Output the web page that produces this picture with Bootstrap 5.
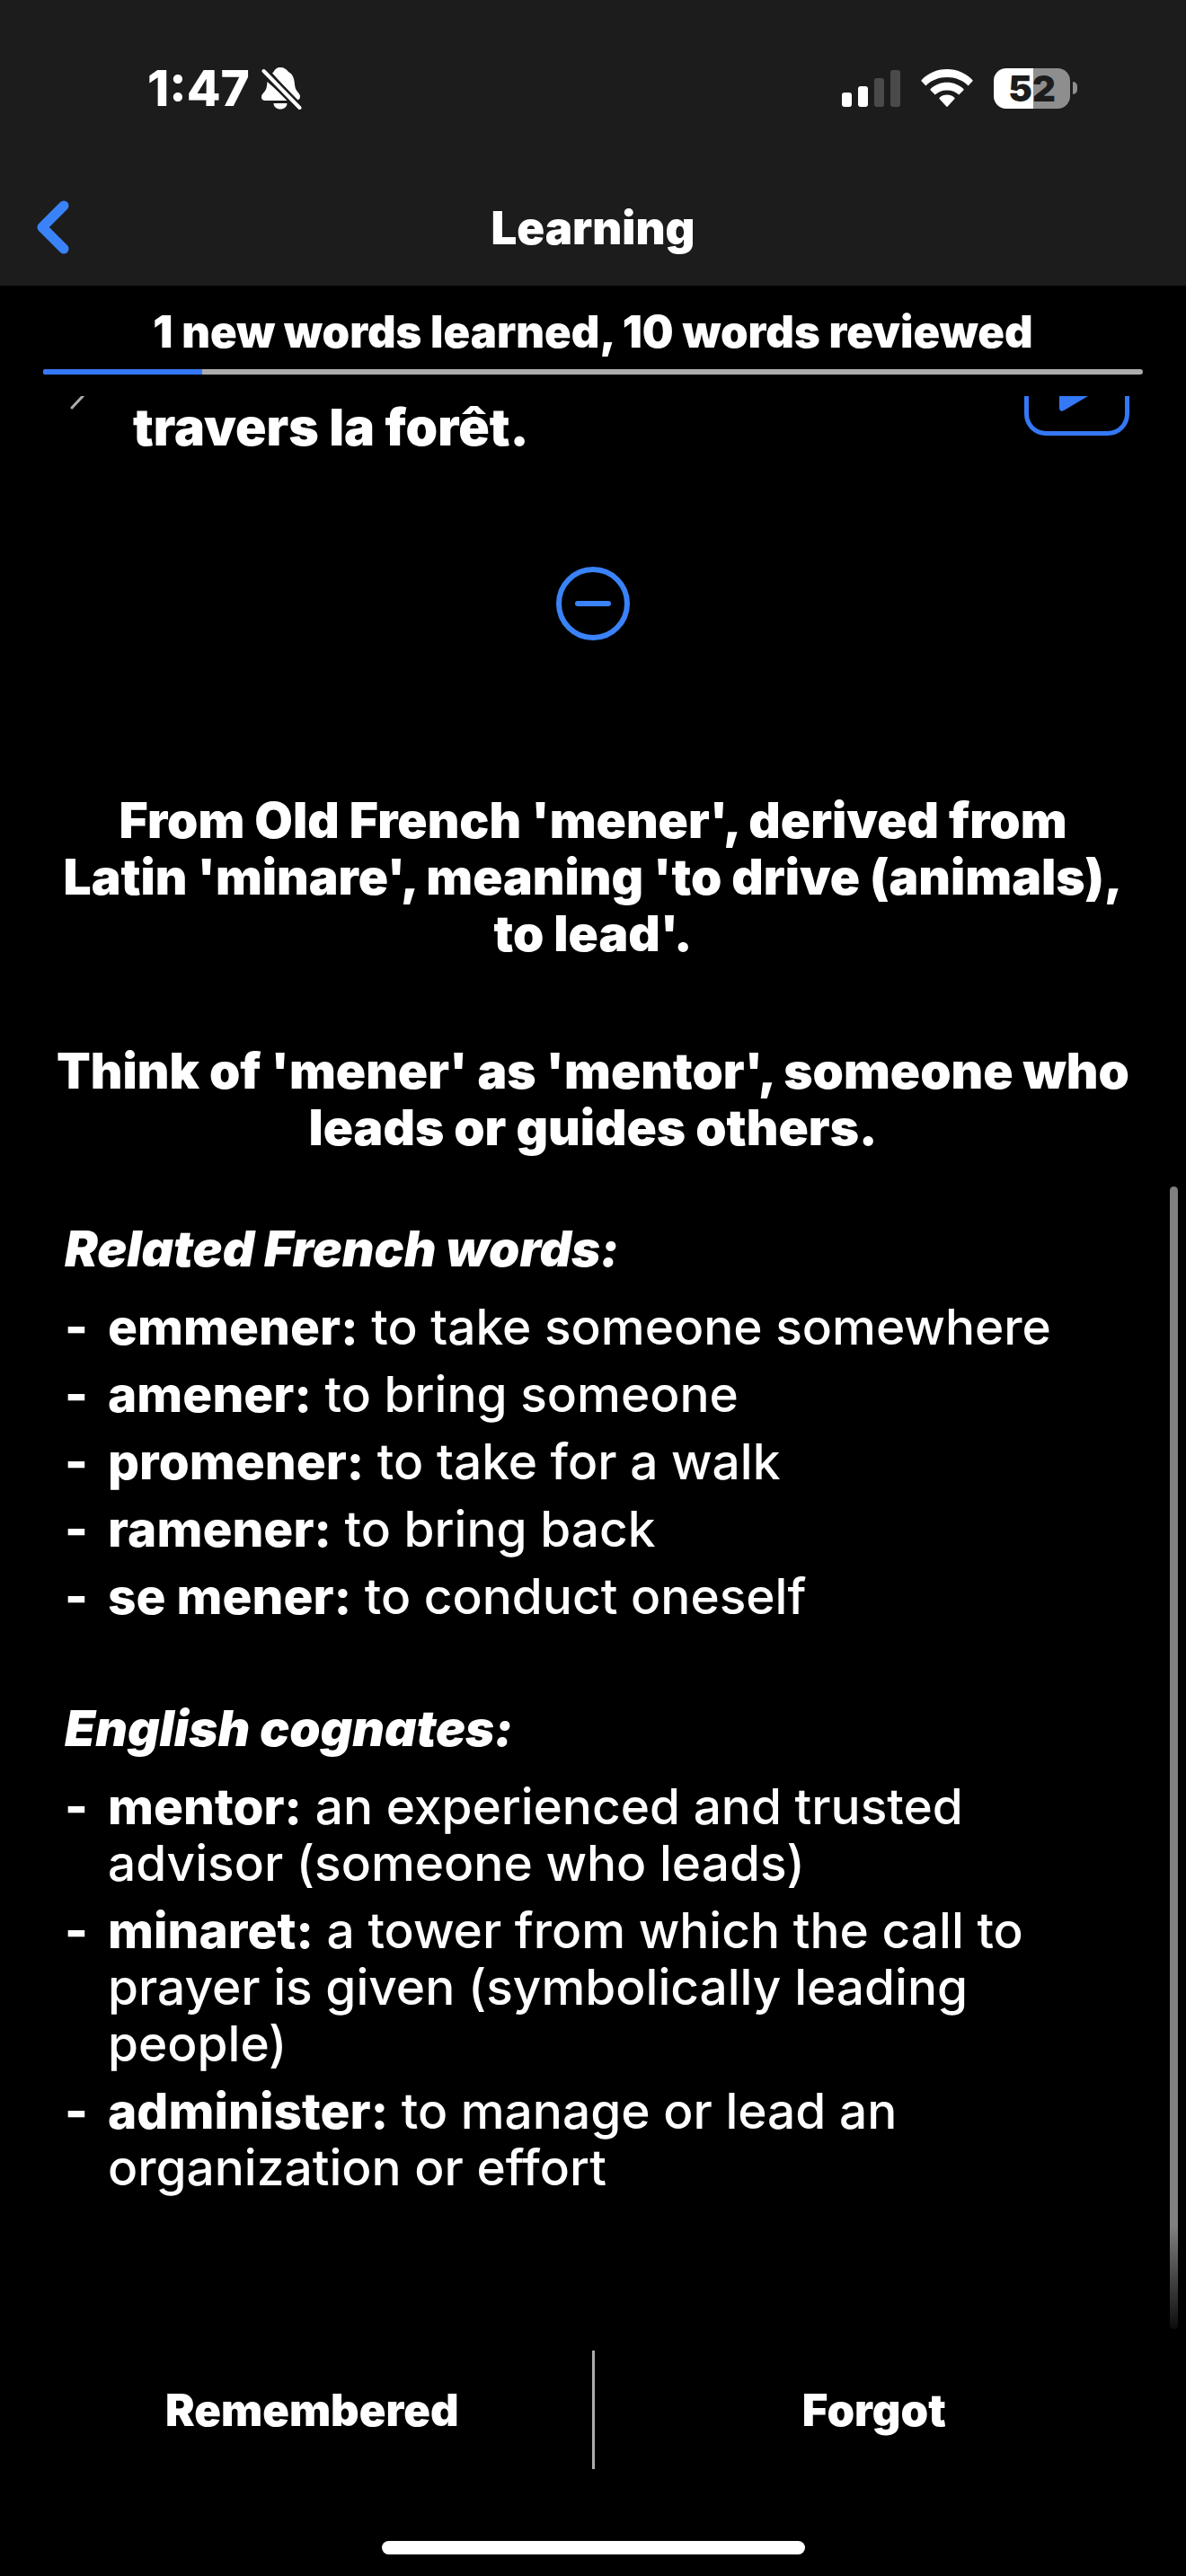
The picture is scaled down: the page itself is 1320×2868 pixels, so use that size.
<!DOCTYPE html>
<html lang="en">
<head>
<meta charset="utf-8">
<meta name="viewport" content="width=device-width, initial-scale=1">
<title>Learning</title>
<link href="https://cdn.jsdelivr.net/npm/bootstrap@5.3.0/dist/css/bootstrap.min.css" rel="stylesheet">
<style>
  :root { --page-gutter: 48px; }
  body { background: #000; color: #fff; font-family: Inter, "Liberation Sans", sans-serif; font-size: 55px; line-height: 63px; }
  svg { display: block; flex: none; }
  .app-top { background: #1c1c1c; }
  .status-row { height: 196px; padding: 0 121px 0 164px; }
  .clock { font-weight: 800; }
  .clock-group { gap: 12px; }
  .status-icons { gap: 23px; }
  .battery-body { width: 85px; height: 45px; border-radius: 14px; background: linear-gradient(90deg, #fff 52%, #8e8e8e 52%); color: #1c1c1c; font-size: 40px; line-height: 45px; font-weight: 900; }
  .battery-tip { width: 5px; height: 14px; border-radius: 0 7px 7px 0; background: #8e8e8e; margin-left: 3px; }
  .title-row { height: 122px; padding: 0 40px; }
  .title-row h1 { font-size: 51px; line-height: 63px; font-weight: 900; }
  .side-slot { width: 60px; }
  .session { padding: 20px var(--page-gutter) 24px; }
  .session p { font-size: 49px; font-weight: 900; margin-bottom: 10px; }
  .session .progress { height: 6px; border-radius: 3px; background: #acacac; }
  .session .progress-bar { background: #3478f6; }
  .example { padding: 0 63px 0 78px; }
  .example-text { font-size: 57px; font-weight: 900; padding: 3px 0 0 54px; }
  .play-btn { width: 117px; height: 44px; border: 5px solid #3478f6; border-top: 0; border-radius: 0 0 24px 24px; }
  .toggle-row { padding: 124px 0 169px; }
  .notes { padding: 0 62px; font-weight: 900; }
  .notes p { margin-bottom: 90px; }
  .word-group { padding: 0 72px; margin-bottom: 84px; font-weight: 500; }
  .word-group h2 { font-size: 55px; line-height: 63px; font-weight: 900; font-style: italic; margin-bottom: 24px; }
  .word-group li { position: relative; padding-left: 48px; margin-bottom: 12px; }
  .word-group li:last-child { margin-bottom: 0; }
  .word-group li::before { content: "-"; font-weight: 800; position: absolute; left: 0; }
  .word-group strong { font-weight: 800; }
  .notes + .word-group { margin-top: -18px; }
  .scroll-thumb { top: 880px; right: 9px; bottom: 0; width: 9px; border-radius: 5px; background: linear-gradient(#808080 91%, #0c0c0c); }
  .answers { padding: 24px 36px 0; height: 156px; }
  .answers button { font-size: 49px; font-weight: 900; line-height: 63px; color: #fff; }
  .answers .vr { width: 3px; background: #acacac; opacity: 1; }
  .home-bar { width: 471px; height: 15px; border-radius: 8px; background: #fff; margin: 80px auto 24px; }
</style>
<script src="https://cdn.jsdelivr.net/npm/bootstrap@5.3.0/dist/js/bootstrap.bundle.min.js"></script>
</head>
<body class="d-flex flex-column min-vh-100">
<header class="app-top">
  <div class="status-row d-flex align-items-center justify-content-between">
    <div class="clock-group d-flex align-items-center">
      <span class="clock">1:47</span>
      <svg width="46" height="48" viewBox="0 0 46 48" fill="#fff" aria-hidden="true">
        <path d="M22 1c-4 0-6 2-7.500 5L13 7.500 40 37.500c2.500 0 4-1.500 4-4 0-4-4.500-5.500-5.500-10.500-1-5-.5-14-7.500-17C29 3 26 1 22 1z"/>
        <path d="M7.500 17C7 23 6.500 25.500 4 28.500c-2 2-3 3.500-3 5.500 0 3 2 4 5 4h25z"/>
        <path d="M14.500 41h15c0 4-3.500 6.500-7.500 6.500s-7.500-2.500-7.500-6.500z"/>
        <path d="M3.500 5l40 41" stroke="#1c1c1c" stroke-width="9"/>
        <path d="M3.500 5l40 41" stroke="#fff" stroke-width="4" stroke-linecap="round"/>
      </svg>
    </div>
    <div class="status-icons d-flex align-items-center">
      <svg width="65" height="42" viewBox="0 0 65 42" aria-hidden="true">
        <rect y="26" width="11" height="16" rx="3" fill="#fff"/><rect x="18" y="19" width="11" height="23" rx="3" fill="#fff"/>
        <rect x="36" y="10" width="11" height="32" rx="3" fill="#4a4a4a"/><rect x="54" y="1" width="11" height="41" rx="3" fill="#4a4a4a"/>
      </svg>
      <svg width="58" height="42" viewBox="0 0 58 42" fill="#fff" aria-hidden="true">
        <path d="M29 0C17.800 0 7.800 4.600.7 12c-.5.500-.5 1.100 0 1.600l4.700 4.800C11.500 12.300 19.800 9 29 9s17.500 3.300 23.600 9.400l4.700-4.800c.5-.5.500-1.100 0-1.600C50.200 4.600 40.200 0 29 0z"/>
        <path d="M29 14.800c-7.100 0-13.500 2.700-18.300 7.100-.5.500-.5 1.100 0 1.600l5 5c3.500-3.200 8.200-5.100 13.300-5.100s9.800 1.900 13.300 5.100l5-5c.5-.5.500-1.100 0-1.600C42.500 17.500 36.100 14.800 29 14.800z"/>
        <path d="M29 28.600c-3.200 0-6.100 1.200-8.300 3.100-.5.500-.5 1.100 0 1.600l7.600 8.200c.5.500.9.500 1.400 0l7.600-8.200c.5-.5.500-1.100 0-1.600-2.200-1.900-5.100-3.100-8.300-3.100z"/>
      </svg>
      <div class="d-flex align-items-center">
        <div class="battery-body text-center">52</div>
        <div class="battery-tip"></div>
      </div>
    </div>
  </div>
  <div class="title-row d-flex align-items-center justify-content-between pb-2">
    <a href="#" class="side-slot" aria-label="Back">
      <svg width="38" height="60" viewBox="0 0 38 60" fill="none" stroke="#3a82f7" stroke-width="11" stroke-linecap="round" stroke-linejoin="round"><path d="M31 6L7 30l24 24"/></svg>
    </a>
    <h1 class="mb-0">Learning</h1>
    <span class="side-slot"></span>
  </div>
</header>

<section class="session">
  <p class="text-center">1 new words learned, 10 words reviewed</p>
  <div class="progress" role="progressbar" aria-label="Session progress" aria-valuenow="14.5" aria-valuemin="0" aria-valuemax="100">
    <div class="progress-bar" style="width: 14.5%"></div>
  </div>
</section>

<main class="position-relative flex-grow-1">
  <div class="example d-flex align-items-start">
    <svg width="16" height="15" viewBox="0 0 16 15" fill="none" stroke="#acacac" stroke-width="3" stroke-linecap="round" aria-hidden="true"><path d="M2 13L16-2"/></svg>
    <div class="example-text flex-grow-1" lang="fr">travers la forêt.</div>
    <button type="button" class="play-btn bg-transparent p-0" aria-label="Play example">
      <svg width="107" height="39" viewBox="0 0 107 39" fill="#3478f6"><path d="M34 0h32L39 16c-2.500 1.500-5 .5-5-2.500z"/></svg>
    </button>
  </div>

  <div class="toggle-row d-flex justify-content-center">
    <button type="button" class="btn p-0 border-0" aria-label="Show less">
      <svg width="82" height="82" viewBox="0 0 82 82" fill="none" stroke="#3a82f7" stroke-width="6" stroke-linecap="round"><circle cx="41" cy="41" r="38"/><path d="M24 41h34"/></svg>
    </button>
  </div>

  <div class="notes text-center">
    <p>From Old French 'mener', derived from Latin 'minare', meaning 'to drive (animals), to lead'.</p>
    <p>Think of 'mener' as 'mentor', someone who leads or guides others.</p>
  </div>

  <section class="word-group">
    <h2>Related French words:</h2>
    <ul class="list-unstyled mb-0">
      <li><strong>emmener:</strong> to take someone somewhere</li>
      <li><strong>amener:</strong> to bring someone</li>
      <li><strong>promener:</strong> to take for a walk</li>
      <li><strong>ramener:</strong> to bring back</li>
      <li><strong>se mener:</strong> to conduct oneself</li>
    </ul>
  </section>

  <section class="word-group">
    <h2>English cognates:</h2>
    <ul class="list-unstyled mb-0">
      <li><strong>mentor:</strong> an experienced and trusted advisor (someone who leads)</li>
      <li><strong>minaret:</strong> a tower from which the call to prayer is given (symbolically leading people)</li>
      <li><strong>administer:</strong> to manage or lead an organization or effort</li>
    </ul>
  </section>
  <div class="scroll-thumb position-absolute"></div>
</main>

<footer>
  <div class="answers d-flex">
    <button type="button" class="btn border-0 flex-fill w-50">Remembered</button>
    <div class="vr"></div>
    <button type="button" class="btn border-0 flex-fill w-50">Forgot</button>
  </div>
  <div class="home-bar"></div>
</footer>
</body>
</html>
